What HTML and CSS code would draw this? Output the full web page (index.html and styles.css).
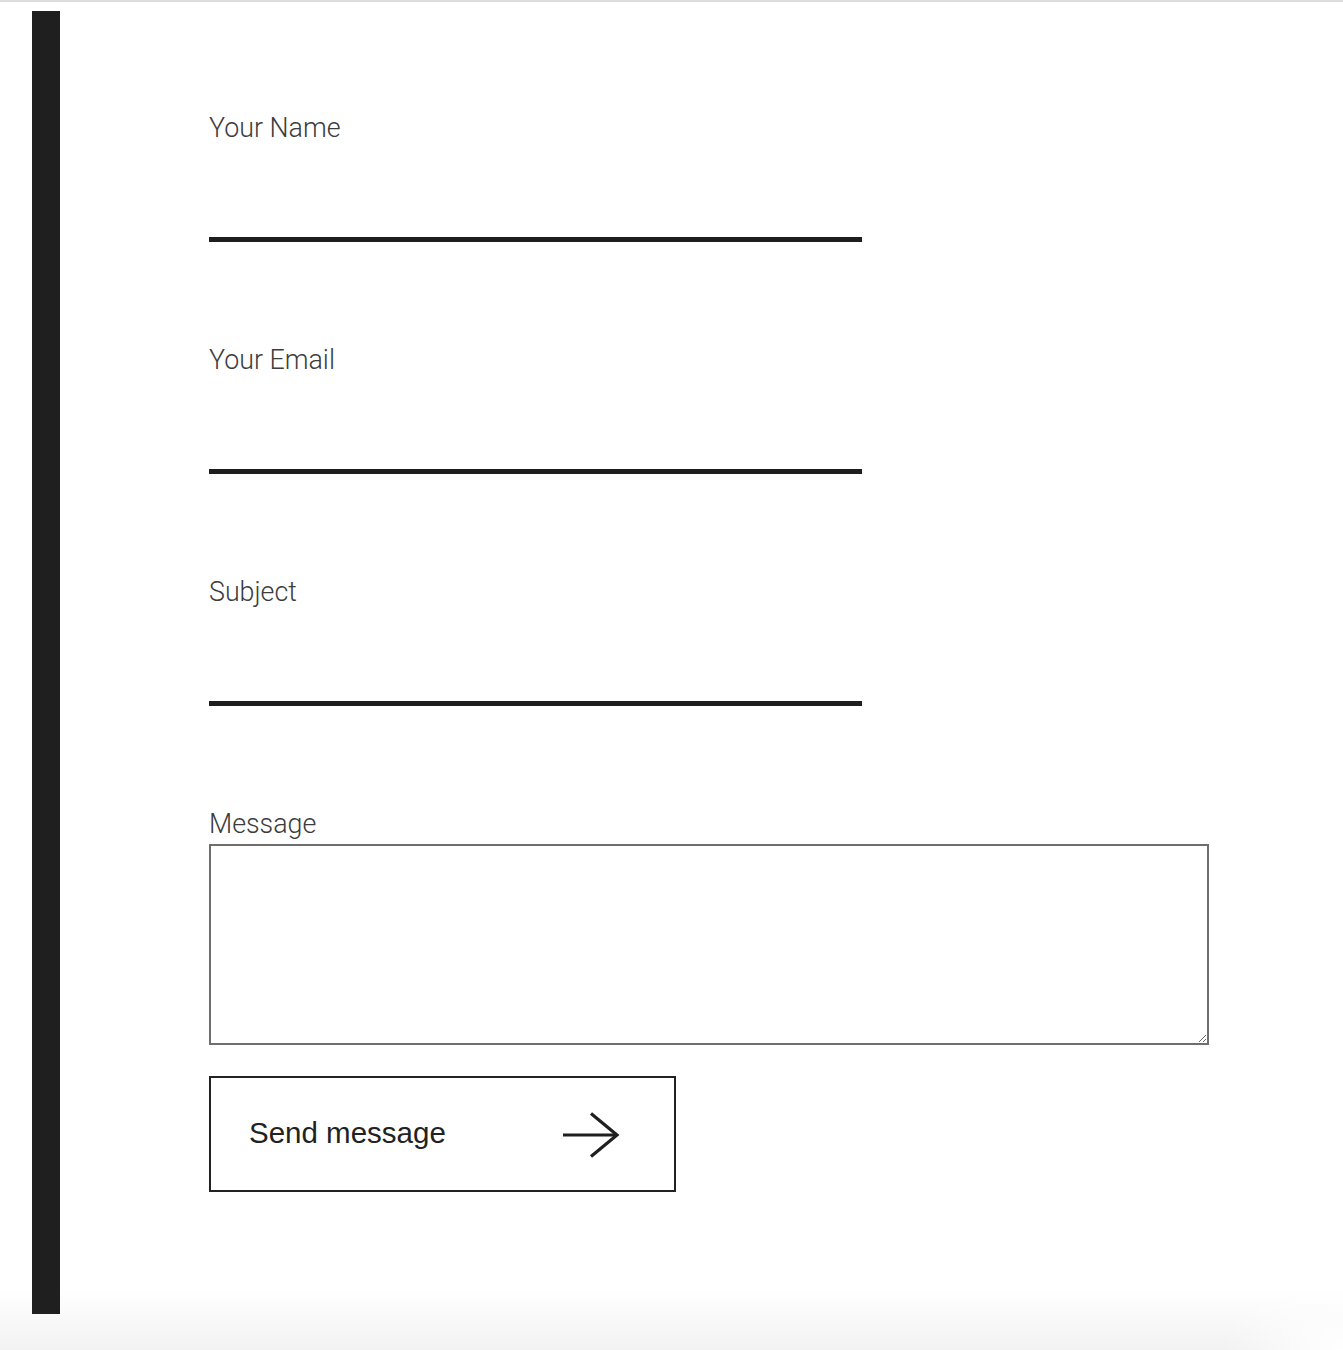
FILE: index.html
```html
<!DOCTYPE html>
<html lang="en">
<head>
<meta charset="utf-8">
<title>Contact form</title>
<link rel="stylesheet" href="styles.css">
</head>
<body>
<div class="page">
  <div class="bar"></div>
  <form class="form">
    <div class="field">
      <label class="label" for="name">Your Name</label>
      <input class="line-input" id="name" type="text">
    </div>
    <div class="field">
      <label class="label" for="email">Your Email</label>
      <input class="line-input" id="email" type="email">
    </div>
    <div class="field">
      <label class="label" for="subject">Subject</label>
      <input class="line-input" id="subject" type="text">
    </div>
    <div class="field field-message">
      <label class="label" for="message">Message</label>
      <textarea class="message" id="message"></textarea>
    </div>
    <button class="send" type="button">
      <span class="send-text">Send message</span>
      <svg class="arrow" width="58" height="46" viewBox="0 0 58 46" aria-hidden="true">
        <path d="M1 23 H55" fill="none" stroke="#1f1f1f" stroke-width="3.2"/>
        <path d="M29 1.5 L55 23 L29 44.5" fill="none" stroke="#1f1f1f" stroke-width="3.2"/>
      </svg>
    </button>
  </form>
</div>
</body>
</html>
```

FILE: styles.css
```css
html, body {
  margin: 0;
  padding: 0;
}

body {
  min-height: 1350px;
  border-top: 2px solid #dcdcdc;
  box-sizing: border-box;
  background:
    radial-gradient(ellipse 120px 80px at 100% 100%, #ffffff 0%, rgba(255,255,255,0) 100%),
    linear-gradient(to bottom, #ffffff 0, #ffffff 1290px, #f2f2f2 1350px);
  font-family: Roboto, "Liberation Sans", sans-serif;
}

.page {
  display: flex;
  align-items: flex-start;
  padding: 9px 0 0 32px;
}

.bar {
  flex: none;
  width: 28px;
  height: 1303px;
  background: #1f1f1f;
}

.form {
  margin-left: 149px;
  padding-top: 99px;
  display: flex;
  flex-direction: column;
}

.field {
  display: flex;
  flex-direction: column;
  margin-bottom: 100px;
}

.label {
  font-family: Roboto, "Liberation Sans", sans-serif;
  font-weight: 300;
  font-size: 26.8px;
  line-height: 36px;
  color: #3c3c3c;
}

.line-input {
  width: 653px;
  height: 96px;
  box-sizing: border-box;
  border: none;
  border-bottom: 5px solid #1e1e1e;
  background: transparent;
  padding: 0;
  outline: none;
  font-size: 24px;
}

.field.field-message {
  margin-bottom: 31px;
}

.field-message .label {
  margin-bottom: 2px;
}

.message {
  width: 1000px;
  height: 201px;
  box-sizing: border-box;
  border: 2px solid #6e6e6e;
  background: #fff;
  padding: 8px;
  font-size: 20px;
  display: block;
}

.send {
  width: 467px;
  height: 116px;
  box-sizing: border-box;
  border: 2px solid #222;
  background: #fff;
  display: flex;
  align-items: center;
  justify-content: space-between;
  padding: 0 54px 0 38px;
  cursor: pointer;
}

.send-text {
  font-family: "Liberation Sans", Arial, sans-serif;
  font-size: 29.5px;
  color: #222;
  padding-bottom: 2px;
}

.arrow {
  display: block;
  margin-top: 2px;
}
```
